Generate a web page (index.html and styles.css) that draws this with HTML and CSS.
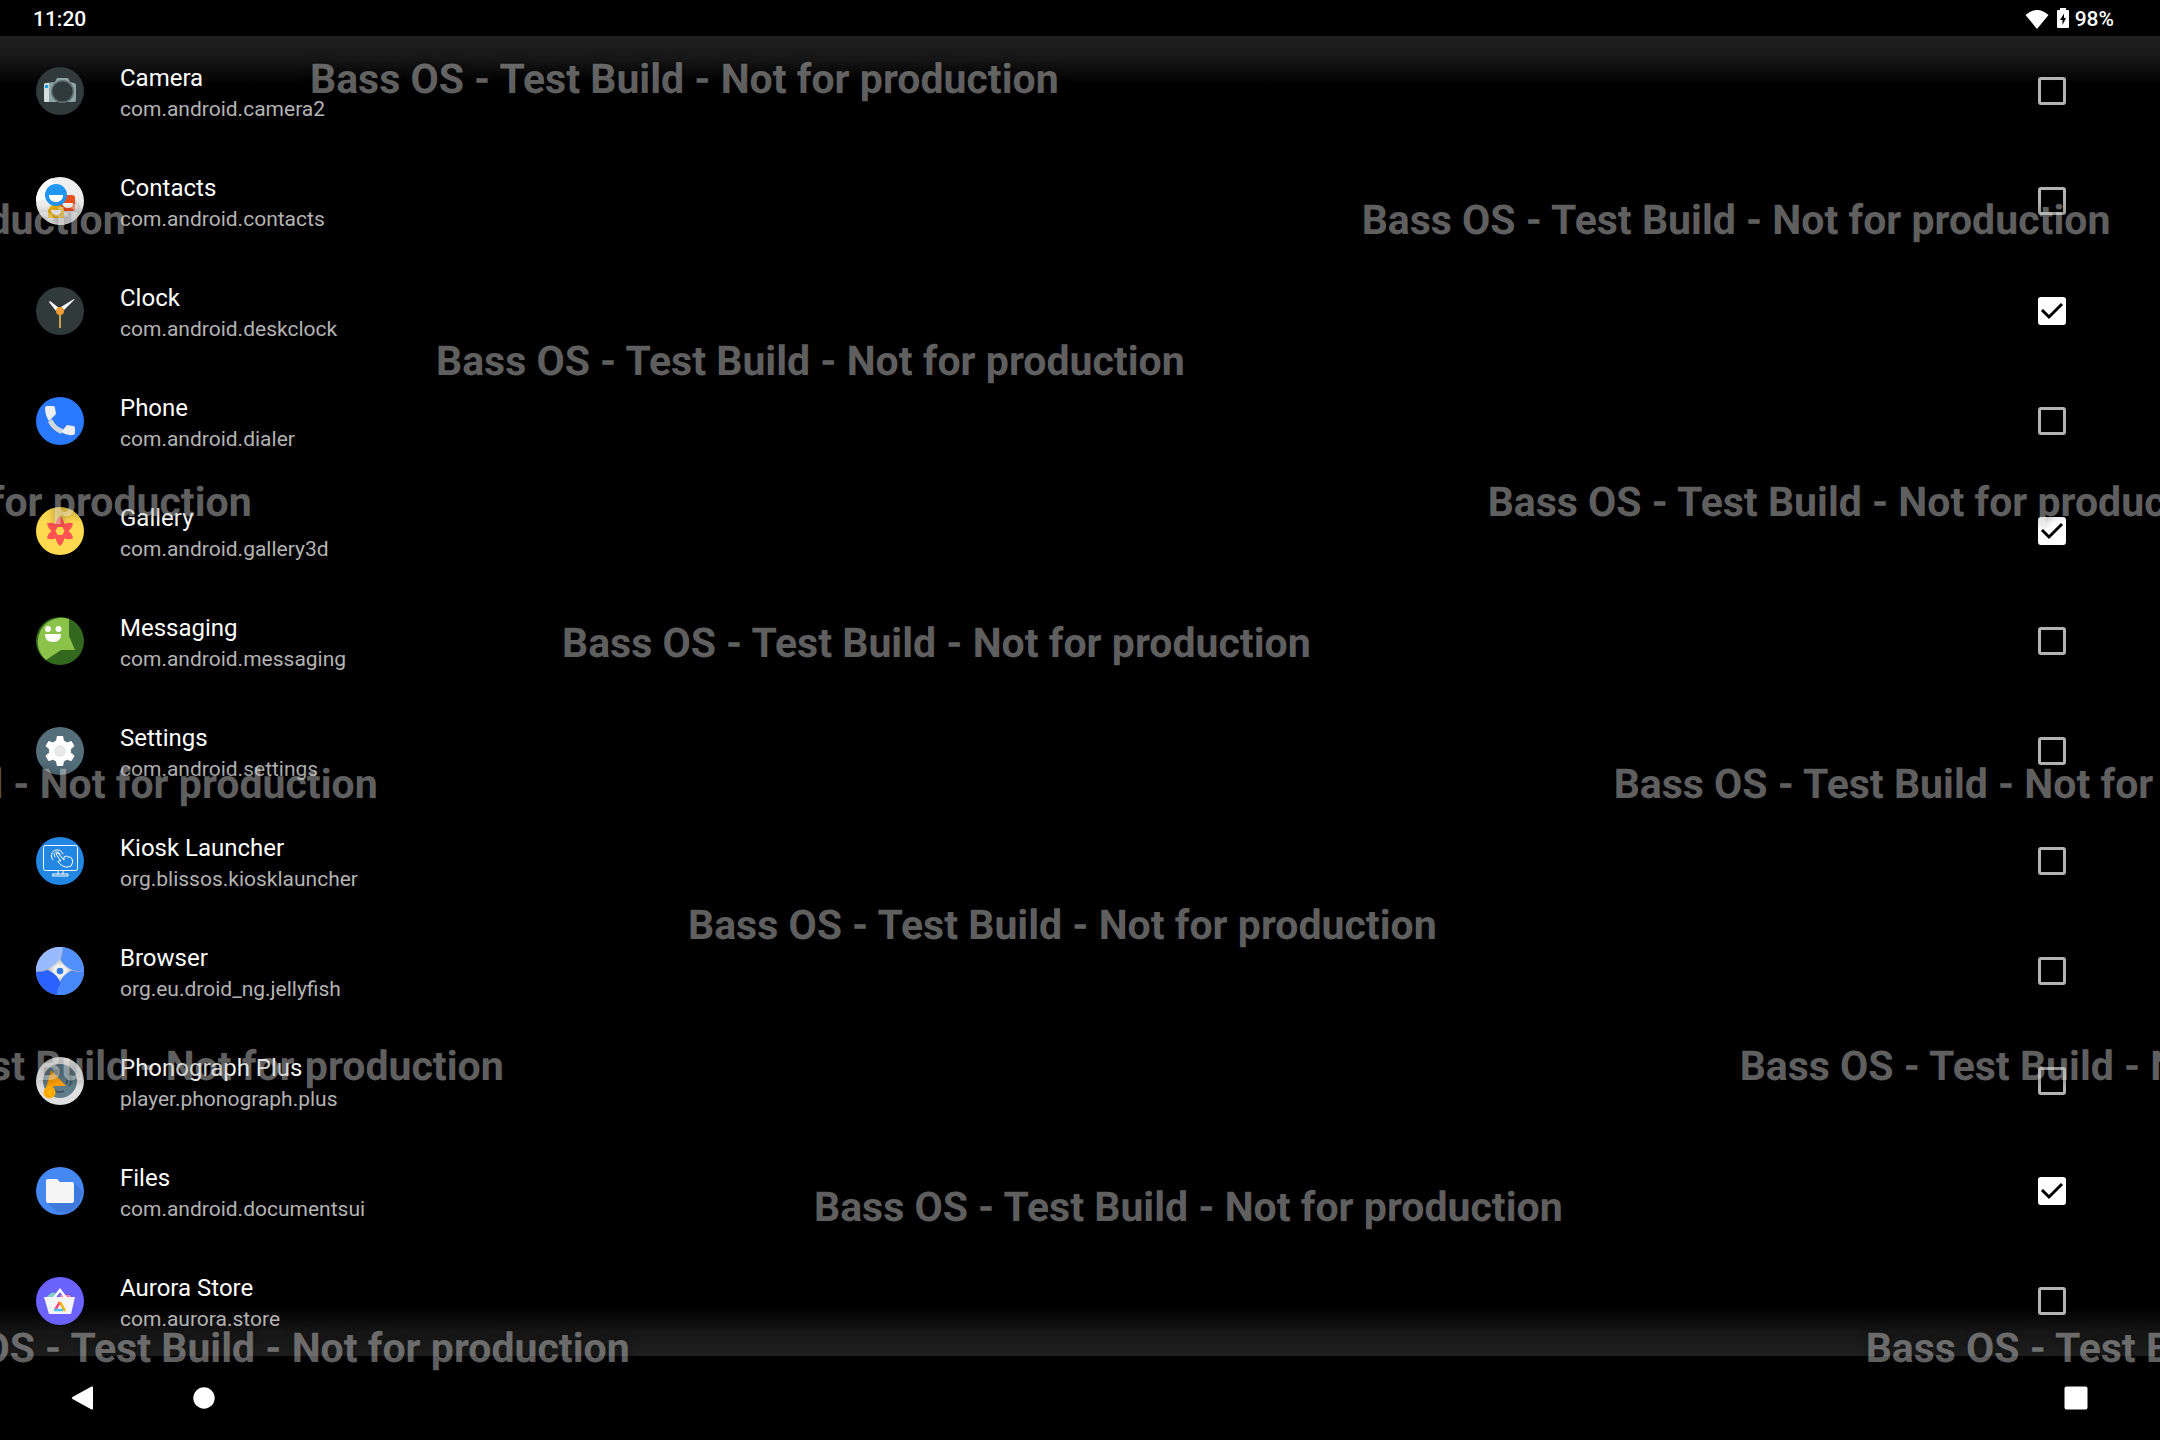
FILE: index.html
```html
<!DOCTYPE html>
<html lang="en">
<head>
<meta charset="utf-8">
<meta name="viewport" content="width=device-width, initial-scale=1">
<title>Apps</title>
<link rel="stylesheet" href="styles.css">
</head>
<body>
<div class="screen">
  <header class="status">
    <time class="time">11:20</time>
    <div class="indicators">
      <svg class="wifi" viewBox="0 0 24 20" aria-hidden="true"><path fill="#fff" d="M.500 6Q12-4 23.500 6L12 20Z"/></svg>
      <svg class="battery" viewBox="0 0 12 20" aria-hidden="true"><path fill="#fff" d="M3 0h6v2h2q1 0 1 1v16q0 1-1 1H1q-1 0-1-1V3q0-1 1-1h2z"/><path d="M7 5.500 3 12H5.500V17L9 10H7z"/></svg>
      <span>98%</span>
    </div>
  </header>

  <main class="content">
    <ul class="apps">
      <li><label class="app">
        <svg class="icon" viewBox="0 0 48 48" aria-hidden="true"><circle cx="24" cy="24" r="24" fill="#303a3a"/><path fill="#90a4a4" d="M8 18q0-2 2-2l9-1 2-4h11l2 4 4 1q2 0 2 3v14q0 2-2 2H8z"/><path fill="#d5dede" d="M8 18q0-2 2-2h3v19h-3q-2 0-2-2z"/><circle cx="26.500" cy="24.500" r="11.500" fill="#5d6c6c"/><circle cx="26.500" cy="24.500" r="10" fill="#303a3a"/><circle cx="10.500" cy="19.500" r="1.700" fill="#039be5"/></svg>
        <span class="text"><span class="name">Camera</span><span class="package">com.android.camera2</span></span>
        <input class="check" type="checkbox">
      </label></li>
      <li><label class="app">
        <svg class="icon" viewBox="0 0 48 48" aria-hidden="true"><circle cx="24" cy="24" r="24" fill="#eee"/><path fill="#fff" d="M0 24A24 24 0 0 1 16 1L24 20z"/><path fill="#dcdcdc" d="M46 33A24 24 0 0 1 24 48L12 42 38 20z"/><rect x="23" y="18" width="16" height="16" rx="3" fill="#f4511e"/><path fill="#fff" d="M26 26h11q0 5-5 5t-6-5"/><path fill="#f4b400" d="M12 41v-7q2-7 8-7t8 7v7z"/><path fill="#fff" d="M15 33h10q0 5-5 5t-5-5"/><circle cx="20" cy="18" r="11" fill="#2196f3"/><path fill="#fff" d="M13 18h14q0 7-7 7t-7-7"/></svg>
        <span class="text"><span class="name">Contacts</span><span class="package">com.android.contacts</span></span>
        <input class="check" type="checkbox">
      </label></li>
      <li><label class="app">
        <svg class="icon" viewBox="0 0 48 48" aria-hidden="true"><circle cx="24" cy="24" r="24" fill="#303a3a"/><path fill="#fff" d="M13 15 14 14l9 7-3 3zM38.500 12.500 38 12 25 20l3 3z"/><path fill="#c9a04a" d="M23 24h2v17h-2z"/><circle cx="24" cy="24" r="4" fill="#f29c38"/></svg>
        <span class="text"><span class="name">Clock</span><span class="package">com.android.deskclock</span></span>
        <input class="check" type="checkbox" checked>
      </label></li>
      <li><label class="app">
        <svg class="icon" viewBox="0 0 48 48" aria-hidden="true"><circle cx="24" cy="24" r="24" fill="#2a79ff"/><path fill="#cfd8dc" d="m12 25 4-3q4 8 11 10l-2 5q-9-4-13-12"/><path fill="#eceff1" d="M9 11q0-2 2-2h6q2 0 2 2l1 6-7 7q-4-6-4-13M25 35l6-7 6 1q2 0 2 2v5q0 2-2 2-6 1-12-3"/></svg>
        <span class="text"><span class="name">Phone</span><span class="package">com.android.dialer</span></span>
        <input class="check" type="checkbox">
      </label></li>
      <li><label class="app">
        <svg class="icon" viewBox="0 0 48 48" aria-hidden="true"><circle cx="24" cy="24" r="24" fill="#ffd94f"/><g fill="#ff5252"><path id="petal" d="M24 9q5 4 4 11h-8q-1-7 4-11"/><use href="#petal" transform="rotate(60 24 24)"/><use href="#petal" transform="rotate(120 24 24)"/><use href="#petal" transform="rotate(180 24 24)"/><use href="#petal" transform="rotate(240 24 24)"/><use href="#petal" transform="rotate(300 24 24)"/></g><circle cx="24" cy="24" r="6.500" fill="none" stroke="#ff5252" stroke-width="3"/></svg>
        <span class="text"><span class="name">Gallery</span><span class="package">com.android.gallery3d</span></span>
        <input class="check" type="checkbox" checked>
      </label></li>
      <li><label class="app">
        <svg class="icon" viewBox="0 0 48 48" aria-hidden="true"><circle cx="24" cy="24" r="24" fill="#33691e"/><path fill="#8bc34a" d="M33 2v17l6 14H25L10 43A24 24 0 0 1 33 2"/><circle cx="12" cy="12" r="3" fill="#fff"/><circle cx="22.500" cy="12" r="3" fill="#fff"/><path fill="#fff" d="M9 17h16q0 8-8 8t-8-8"/></svg>
        <span class="text"><span class="name">Messaging</span><span class="package">com.android.messaging</span></span>
        <input class="check" type="checkbox">
      </label></li>
      <li><label class="app">
        <svg class="icon" viewBox="0 0 48 48" aria-hidden="true"><circle cx="24" cy="24" r="24" fill="#546e7a"/><g fill="#fff"><circle cx="24" cy="24" r="11"/><path id="tooth" d="M21 9h6q1 3 1 7h-8q0-4 1-7"/><use href="#tooth" transform="rotate(60 24 24)"/><use href="#tooth" transform="rotate(120 24 24)"/><use href="#tooth" transform="rotate(180 24 24)"/><use href="#tooth" transform="rotate(240 24 24)"/><use href="#tooth" transform="rotate(300 24 24)"/></g><circle cx="24" cy="24" r="6" fill="#e8e8e8"/></svg>
        <span class="text"><span class="name">Settings</span><span class="package">com.android.settings</span></span>
        <input class="check" type="checkbox">
      </label></li>
      <li><label class="app">
        <svg class="icon" viewBox="0 0 48 48" aria-hidden="true"><circle cx="24" cy="24" r="24" fill="#2286e3"/><g fill="none" stroke="#fff" stroke-linecap="round" stroke-linejoin="round"><rect x="7.500" y="8.500" width="34" height="25" rx="2"/><path d="M22 34v3M27 34v3M17 37h15v2H17zM24 27l-2-2q0-2 3-1l-5-7q1-2 3 0l5 6V20q3-2 4 0 3-1 4 2 2 3-1 7-6 3-11-2"/><path d="M17 23a6 6 0 1 1 10-6M19 20a3 3 0 1 1 5-3"/></g></svg>
        <span class="text"><span class="name">Kiosk Launcher</span><span class="package">org.blissos.kiosklauncher</span></span>
        <input class="check" type="checkbox">
      </label></li>
      <li><label class="app">
        <svg class="icon" viewBox="0 0 48 48" aria-hidden="true"><defs><radialGradient id="glow"><stop offset="0" stop-color="#fff"/><stop offset=".25" stop-color="#eee"/><stop offset=".6" stop-color="#aaa"/></radialGradient></defs><circle cx="24" cy="24" r="24" fill="url(#glow)"/><path fill="#9abaff" d="M0 25A24 24 0 0 1 27 0Q26 21 0 25"/><path fill="#5290fb" d="M27 0A24 24 0 0 1 48 25Q30 24 24.500 12.500q2.500-5 2.500-12"/><path fill="#4687fa" d="M48 25A24 24 0 0 1 21 48Q22 29 36 23.500q5 2 12 1.500"/><path fill="#2962ff" d="M21 48A24 24 0 0 1 0 25q7 0 12-2 10 5 12.500 13-3 5-3.500 12"/><circle cx="24" cy="24" r="3.300" fill="#3077e3"/></svg>
        <span class="text"><span class="name">Browser</span><span class="package">org.eu.droid_ng.jellyfish</span></span>
        <input class="check" type="checkbox">
      </label></li>
      <li><label class="app">
        <svg class="icon" viewBox="0 0 48 48" aria-hidden="true"><circle cx="24" cy="24" r="24" fill="#e0e0e0"/><circle cx="24" cy="24" r="17" fill="#607d8b"/><path d="M32 17q6 6 1 12M29 20q4 4 1 7M19 34q5 2 9 0" fill="none" stroke="#455a64" stroke-width="2"/><circle cx="20" cy="15" r="2.500" fill="#37474f"/><path fill="#ffa000" d="M15 13 30 29H18l-4 7-5-2z"/><circle cx="13.500" cy="35.500" r="6" fill="#ffb300"/><circle cx="13.500" cy="35.500" r="4" fill="none" stroke="#ff9800"/></svg>
        <span class="text"><span class="name">Phonograph Plus</span><span class="package">player.phonograph.plus</span></span>
        <input class="check" type="checkbox">
      </label></li>
      <li><label class="app">
        <svg class="icon" viewBox="0 0 48 48" aria-hidden="true"><circle cx="24" cy="24" r="24" fill="#4688f1"/><path fill="#4079dc" d="m38 16 9 9-4 12-10 9-12-1-10-10z"/><path fill="#f5f5f5" d="M10 14q0-2 2-2h9l3 3h12q2 0 2 2v17q0 2-2 2H12q-2 0-2-2z"/></svg>
        <span class="text"><span class="name">Files</span><span class="package">com.android.documentsui</span></span>
        <input class="check" type="checkbox" checked>
      </label></li>
      <li><label class="app">
        <svg class="icon" viewBox="0 0 48 48" aria-hidden="true"><circle cx="24" cy="24" r="24" fill="#6c63ff"/><path fill="#80cbc4" d="M11 20q4-6 9-4l-2 4z"/><path fill="#ff80ab" d="M24 18h10l1 3H24z"/><path fill="none" stroke="#fff" stroke-width="2.500" d="m18 21 6-8 6 8"/><path fill="#f5f5f5" d="M8 20h31l-4 17H13z"/><path fill="none" stroke="#ff4081" stroke-width="2.500" d="m19 33 5-8"/><path fill="none" stroke="#ffb300" stroke-width="2.500" d="m24 25 5 9"/><path fill="none" stroke="#4fc3f7" stroke-width="2.500" d="M18 33h9"/></svg>
        <span class="text"><span class="name">Aurora Store</span><span class="package">com.aurora.store</span></span>
        <input class="check" type="checkbox">
      </label></li>
    </ul>
  </main>

  <nav class="navbar" aria-label="System navigation">
    <button class="nav" type="button" aria-label="Back"><svg viewBox="0 0 24 24" aria-hidden="true"><path fill="#fff" d="M22 1.500v21q0 1.500-1.500.9L1.500 13q-1.500-1 0-2L20.500.6Q22 0 22 1.500"/></svg></button>
    <button class="nav" type="button" aria-label="Home"><svg viewBox="0 0 24 24" aria-hidden="true"><circle cx="12" cy="12" r="10.700" fill="#fff"/></svg></button>
    <button class="nav recents" type="button" aria-label="Recent apps"><svg viewBox="0 0 24 24" aria-hidden="true"><rect x=".5" y=".5" width="23" height="23" rx="2" fill="#fff"/></svg></button>
  </nav>

  <div class="watermarks" aria-hidden="true">
    <p class="mark step0">Bass OS - Test Build - Not for production</p>
    <p class="mark pair step0"><span>Bass OS - Test Build - Not for production</span><span>Bass OS - Test Build - Not for production</span></p>
    <p class="mark step1">Bass OS - Test Build - Not for production</p>
    <p class="mark pair step1"><span>Bass OS - Test Build - Not for production</span><span>Bass OS - Test Build - Not for production</span></p>
    <p class="mark step2">Bass OS - Test Build - Not for production</p>
    <p class="mark pair step2"><span>Bass OS - Test Build - Not for production</span><span>Bass OS - Test Build - Not for production</span></p>
    <p class="mark step3">Bass OS - Test Build - Not for production</p>
    <p class="mark pair step3"><span>Bass OS - Test Build - Not for production</span><span>Bass OS - Test Build - Not for production</span></p>
    <p class="mark step4">Bass OS - Test Build - Not for production</p>
    <p class="mark pair step4"><span>Bass OS - Test Build - Not for production</span><span>Bass OS - Test Build - Not for production</span></p>
  </div>
</div>
</body>
</html>
```
FILE: styles.css
```css
* { box-sizing: border-box; }

body {
  margin: 0;
  background: #000;
  color: #fff;
  font-family: Roboto, "Liberation Sans", sans-serif;
}

.screen {
  position: relative;
  display: flex;
  flex-direction: column;
  min-height: 100vh;
  overflow: hidden;
}

.status {
  display: flex;
  justify-content: space-between;
  align-items: center;
  height: 36px;
  padding: 2px 46px 0 33px;
  font-size: 21px;
  font-weight: 500;
  line-height: 24px;
}

.indicators { display: flex; align-items: center; }
.wifi { width: 24px; height: 20px; margin-right: 8px; }
.battery { width: 12px; height: 20px; margin: -2px 6px 0 0; }

.content {
  flex: 1;
  background:
    linear-gradient(#1f1f1f, #161616 24px, #000 48px) top / 100% 48px no-repeat,
    linear-gradient(#000, #161616 24px, #1f1f1f) bottom / 100% 48px no-repeat;
}

.apps { margin: 0; padding: 0; list-style: none; }

.app {
  display: flex;
  align-items: center;
  height: 110px;
  padding: 0 94px 0 36px;
}

.icon { flex: none; width: 48px; height: 48px; margin-right: 36px; }
.text { flex: 1; display: flex; flex-direction: column; padding-top: 4px; }
.name { font-size: 24px; line-height: 32px; }
.package { font-size: 21px; line-height: 30px; color: #b3b3b3; }

.check {
  appearance: none;
  flex: none;
  width: 28px;
  height: 28px;
  margin: 0;
  border: 3px solid #b3b3b3;
  border-radius: 3px;
}

.check:checked {
  border: 0;
  background: #fff url("data:image/svg+xml,%3Csvg xmlns='http://www.w3.org/2000/svg' viewBox='0 0 28 28'%3E%3Cpath d='M4 13l7 7L24 7' fill='none' stroke='%23000' stroke-width='3'/%3E%3C/svg%3E");
}

.navbar {
  display: flex;
  align-items: center;
  gap: 73px;
  height: 84px;
  padding: 0 60px 0 59px;
}

.nav {
  display: grid;
  place-items: center;
  width: 48px;
  height: 48px;
  padding: 0;
  border: 0;
  background: none;
}

.nav svg { width: 24px; height: 24px; }
.recents { margin-left: auto; }

/* Staggered build notice laid over the whole screen */
.watermarks {
  position: absolute;
  inset: 0;
  padding-top: 56px;
  overflow: hidden;
  pointer-events: none;
  font-size: 41px;
  font-weight: 700;
  line-height: 48px;
  white-space: nowrap;
  color: rgba(255, 255, 255, .38);
  text-shadow: 0 0 10px rgba(0, 0, 0, .4);
  text-rendering: geometricPrecision;
}

.mark { margin: 0 0 93px 310px; }
.pair { display: flex; gap: 1236px; margin-left: -623px; }
.step1 { transform: translateX(126px); }
.step2 { transform: translateX(252px); }
.step3 { transform: translateX(378px); }
.step4 { transform: translateX(504px); }
```
